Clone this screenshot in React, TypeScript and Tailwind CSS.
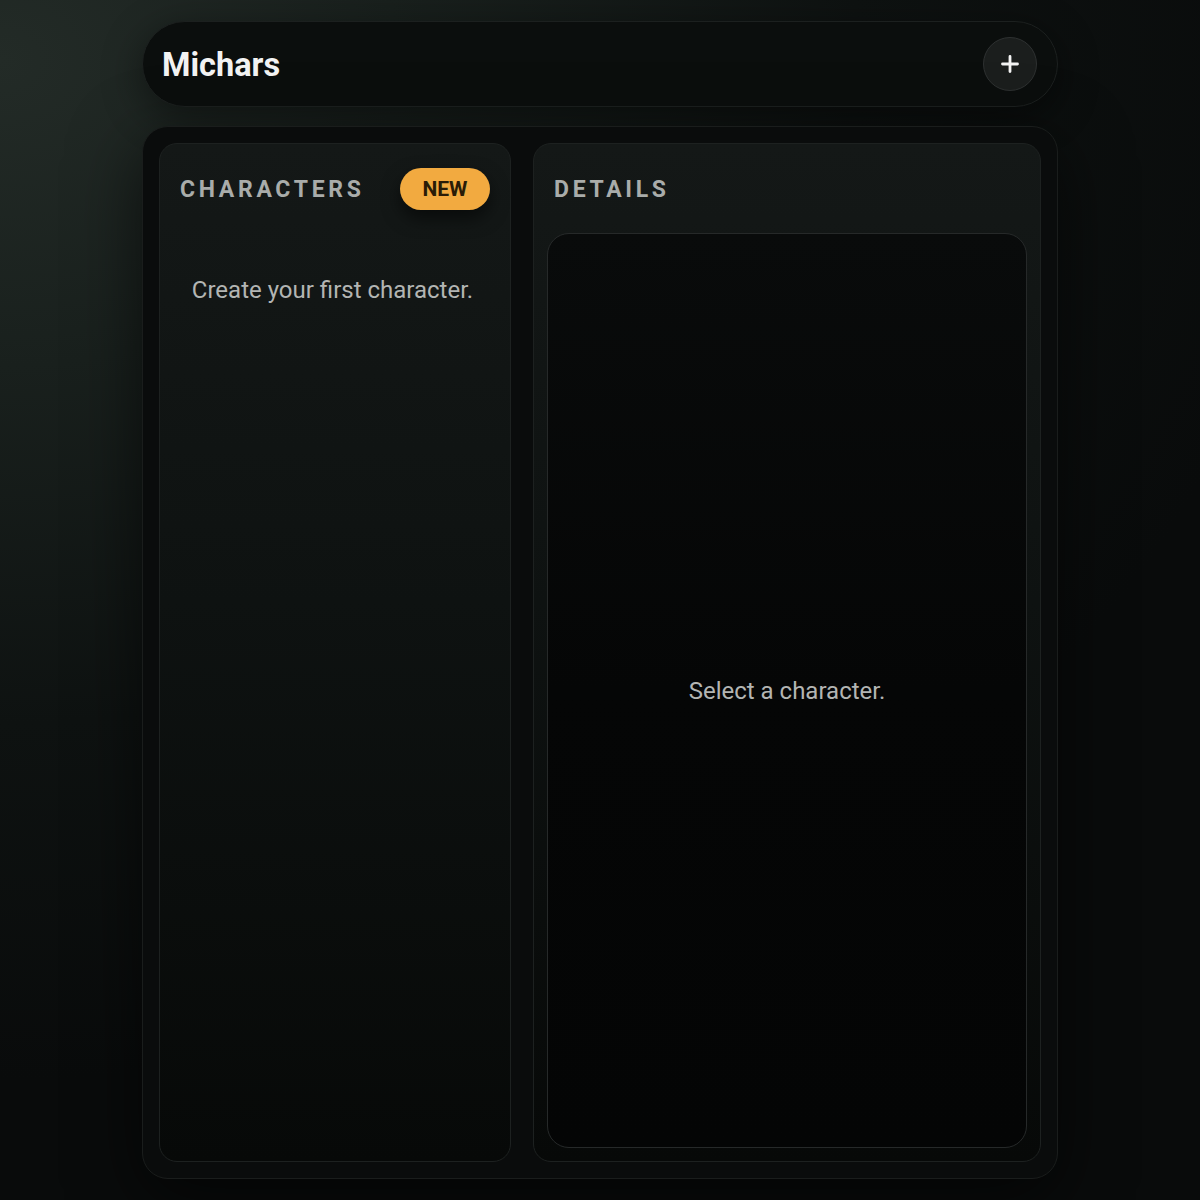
import React from "react";

function PlusIcon() {
  return (
    <svg width="18" height="18" viewBox="0 0 18 18" fill="none">
      <path d="M9 1.5v15M1.5 9h15" stroke="#f4f4f4" strokeWidth="2.8" strokeLinecap="round" />
    </svg>
  );
}

export default function App() {
  return (
    <div
      className="min-h-[1200px] w-full bg-[radial-gradient(ellipse_110%_85%_at_0%_5%,#232b27_0%,#19201d_30%,#0e1211_65%,#090b0b_100%)] text-white"
      style={{ fontFamily: "Roboto, 'Noto Sans', sans-serif" }}
    >
      <div className="mx-auto flex w-[916px] flex-col pt-[21px]">
        {/* Top bar */}
        <header className="flex h-[86px] items-center justify-between rounded-full border border-[#1c201f] bg-[#0b0e0d] pl-[19px] pr-[20px] shadow-[0_10px_40px_rgba(0,0,0,0.45)]">
          <h1 className="mt-[2px] text-[32.5px] font-bold leading-none text-[#f3f3f3]">Michars</h1>
          <button className="flex h-[54px] w-[54px] items-center justify-center rounded-full border border-[#2e3131] bg-[#1b1e1d]">
            <PlusIcon />
          </button>
        </header>

        {/* Workspace */}
        <main className="mt-[19px] flex h-[1053px] gap-[22px] rounded-[26px] border border-[#1a1d1c] bg-[#0a0c0c] p-[16px] shadow-[0_20px_70px_rgba(0,0,0,0.6)]">
          {/* Characters list */}
          <section className="flex w-[352px] flex-col rounded-[18px] border border-[#1d2120] bg-[linear-gradient(180deg,#141817_0%,#0e1211_45%,#070908_100%)] px-[20px] pt-[24px]">
            <div className="flex h-[42px] items-center justify-between">
              <h2 className="text-[23px] font-bold leading-none tracking-[0.16em] text-[#a9acaa]">CHARACTERS</h2>
              <span className="flex h-[42px] w-[90px] items-center justify-center rounded-full bg-[#f2aa40] text-[21px] font-bold leading-none text-[#2a1c07] shadow-[0_8px_18px_rgba(0,0,0,0.55)]">
                NEW
              </span>
            </div>
            <p className="mt-[64px] pr-[5px] text-center text-[24px] leading-[32px] text-[#b3b5b3]">Create your first character.</p>
          </section>

          {/* Details */}
          <section className="flex flex-1 flex-col rounded-[18px] border border-[#1d2120] bg-[linear-gradient(180deg,#141817_0%,#0e1211_45%,#070908_100%)] p-[13px]">
            <div className="mt-[11px] flex h-[42px] items-center px-[7px]">
              <h2 className="text-[23px] font-bold leading-none tracking-[0.16em] text-[#a9acaa]">DETAILS</h2>
            </div>
            <div className="mt-[23px] flex flex-1 items-center justify-center rounded-[22px] border border-[#262929] bg-[linear-gradient(180deg,#090b0b_0%,#050606_50%,#040505_100%)]">
              <p className="text-[24px] leading-[32px] text-[#b3b5b3]">Select a character.</p>
            </div>
          </section>
        </main>
      </div>
    </div>
  );
}
